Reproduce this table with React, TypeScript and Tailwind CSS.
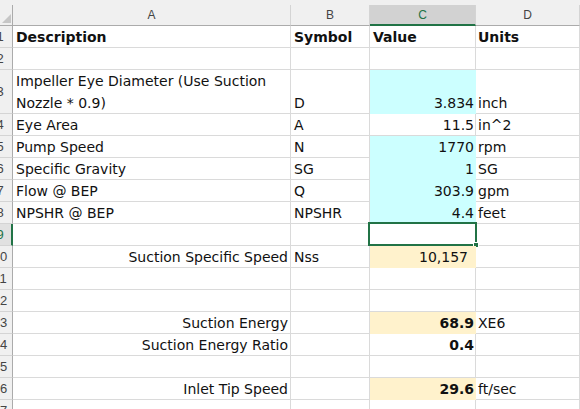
import React from 'react';

type Row = {
  n: number;
  h?: number;
  a?: React.ReactNode;
  aRight?: boolean;
  b?: string;
  c?: string;
  cFill?: 'cyan' | 'orange';
  cBold?: boolean;
  cPad?: boolean;
  d?: string;
  head?: boolean;
};

const rows: Row[] = [
  { n: 1, a: 'Description', b: 'Symbol', c: 'Value', d: 'Units', head: true },
  { n: 2 },
  {
    n: 3,
    h: 44,
    a: (
      <span>
        Impeller Eye Diameter (Use Suction
        <br />
        Nozzle * 0.9)
      </span>
    ),
    b: 'D',
    c: '3.834',
    cFill: 'cyan',
    d: 'inch',
  },
  { n: 4, a: 'Eye Area', b: 'A', c: '11.5', d: 'in^2' },
  { n: 5, a: 'Pump Speed', b: 'N', c: '1770', cFill: 'cyan', d: 'rpm' },
  { n: 6, a: 'Specific Gravity', b: 'SG', c: '1', cFill: 'cyan', d: 'SG' },
  { n: 7, a: 'Flow @ BEP', b: 'Q', c: '303.9', cFill: 'cyan', d: 'gpm' },
  { n: 8, a: 'NPSHR @ BEP', b: 'NPSHR', c: '4.4', cFill: 'cyan', d: 'feet' },
  { n: 9 },
  { n: 10, a: 'Suction Specific Speed', aRight: true, b: 'Nss', c: '10,157', cFill: 'orange', cPad: true },
  { n: 11 },
  { n: 12 },
  { n: 13, a: 'Suction Energy', aRight: true, c: '68.9', cFill: 'orange', cBold: true, d: 'XE6' },
  { n: 14, a: 'Suction Energy Ratio', aRight: true, c: '0.4', cBold: true },
  { n: 15 },
  { n: 16, a: 'Inlet Tip Speed', aRight: true, c: '29.6', cFill: 'orange', cBold: true, d: 'ft/sec' },
  { n: 17 },
];

const cell = 'flex items-end shrink-0 border-r border-b border-[#dadada] overflow-visible whitespace-nowrap leading-[20px]';

function RowHead({ n }: { n: number }) {
  const sel = n === 9;
  return (
    <div
      className={`w-[13px] shrink-0 overflow-hidden flex items-center border-b border-[#d4d4d4] ${
        sel ? 'bg-[#e1e1e1] border-r-2 border-r-[#217346]' : 'bg-[#f0f0f0] border-r border-r-[#ababab]'
      }`}
    >
      <div
        className={`w-[26px] -ml-[13px] shrink-0 text-center text-[13px] leading-none font-['Liberation_Sans',sans-serif] ${
          sel ? 'text-[#217346]' : 'text-[#444]'
        }`}
      >
        {n}
      </div>
    </div>
  );
}

function ColHead({ label, w, sel }: { label: string; w: string; sel?: boolean }) {
  return (
    <div
      className={`${w} shrink-0 flex items-center justify-center border-r border-[#d4d4d4] text-[12px] font-['Liberation_Sans',sans-serif] ${
        sel ? 'bg-[#d2d2d2] text-[#217346] border-b-2 border-b-[#217346]' : 'bg-[#f0f0f0] text-[#444] border-b border-b-[#ababab]'
      }`}
    >
      {label}
    </div>
  );
}

export default function App() {
  return (
    <div className="w-[580px] h-[409px] overflow-hidden bg-white font-['DejaVu_Sans',sans-serif] text-[14px] text-[#111]">
      {/* column headers */}
      <div className="h-[5px] bg-[#f0f0f0]" />
      <div className="flex h-[21px]">
        <div className="w-[13px] shrink-0 bg-[#f0f0f0] border-r border-b border-[#ababab] flex items-end justify-end pr-[1px] pb-[2px]">
          <svg width="9" height="9" viewBox="0 0 9 9">
            <path d="M9 0 L9 9 L0 9 Z" fill="#c6c6c6" />
          </svg>
        </div>
        <ColHead label="A" w="w-[278px]" />
        <ColHead label="B" w="w-[79px]" />
        <ColHead label="C" w="w-[106px]" sel />
        <ColHead label="D" w="w-[104px]" />
        <div className="flex-1 bg-[#f0f0f0] border-b border-[#ababab]" />
      </div>

      {/* sheet rows */}
      {rows.map((r) => {
        const h = r.h === 44 ? 'h-[44px]' : 'h-[22px]';
        const fill =
          r.cFill === 'cyan'
            ? 'bg-[#ccffff] border-[#ccffff]'
            : r.cFill === 'orange'
            ? 'bg-[#fff2cc] border-[#fff2cc]'
            : 'bg-white border-[#dadada]';
        const weight = r.head ? 'font-bold' : '';
        return (
          <div key={r.n} className={`flex ${h}`}>
            <RowHead n={r.n} />
            <div className={`${cell} w-[278px] pl-[3px] pr-[2px] ${r.aRight ? 'justify-end' : ''} ${weight}`}>
              <div className="leading-[22px] -mb-[1px]">{r.a}</div>
            </div>
            <div className={`${cell} w-[79px] pl-[3px] ${weight}`}>{r.b}</div>
            <div
              className={`flex items-end shrink-0 border-r border-b whitespace-nowrap relative w-[106px] leading-[20px] ${
                r.head ? 'justify-start pl-[3px]' : 'justify-end'
              } ${r.cPad ? 'pr-[7px]' : 'pr-[1px]'} ${r.cBold || r.head ? 'font-bold' : ''} ${fill}`}
            >
              {r.c}
              {r.n === 9 && (
                <div className="absolute -left-[2px] -top-[2px] -right-[2px] -bottom-[1px] border-2 border-[#217346]">
                  <div className="absolute -right-[4px] -bottom-[4px] w-[6px] h-[6px] bg-[#217346] border border-white" />
                </div>
              )}
            </div>
            <div className={`${cell} w-[104px] pl-[2px] ${weight}`}>{r.d}</div>
            <div className="flex-1 border-b border-[#dadada]" />
          </div>
        );
      })}
    </div>
  );
}
